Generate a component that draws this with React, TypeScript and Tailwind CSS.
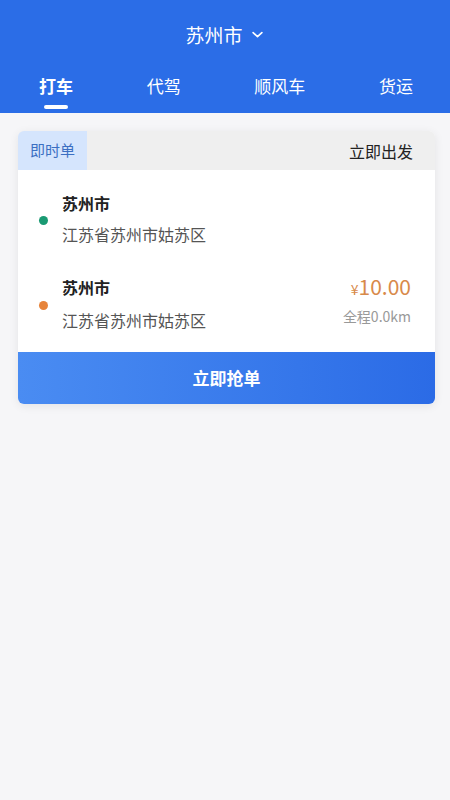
const tabs = ['打车', '代驾', '顺风车', '货运'];

const font = { fontFamily: '"Noto Sans CJK SC", "Noto Sans", sans-serif' };

const App = () => {
  return (
    <div className="min-h-[800px] w-full bg-[#f6f6f8]" style={font}>
      {/* 顶部蓝色区域 */}
      <div className="bg-[#2b6de7] h-[113px] flex flex-col">
        <div className="flex items-center justify-center gap-[7px] pt-[19px] h-[50px] text-white text-[19px]">
          <span className="leading-none">苏州市</span>
          <svg width="15" height="15" viewBox="0 0 24 24" fill="none" stroke="white" strokeWidth="2.6" strokeLinecap="round" strokeLinejoin="round">
            <path d="M5 9l7 6.5 7-6.5" />
          </svg>
        </div>
        <div className="flex justify-between pl-[39px] pr-[37px] mt-[27px]">
          {tabs.map((t, i) => (
            <div key={t} className="flex flex-col items-center">
              <span className={`text-[17px] leading-none text-white ${i === 0 ? 'font-bold' : ''}`}>{t}</span>
              <div className={`mt-[11px] h-[4px] w-[24px] rounded-full ${i === 0 ? 'bg-white' : 'bg-transparent'}`} />
            </div>
          ))}
        </div>
      </div>

      {/* 订单卡片 */}
      <div className="ml-[18px] mr-[15px] mt-[18px] rounded-[6px] bg-white shadow-[0_2px_10px_rgba(0,0,0,0.08)] overflow-hidden">
        <div className="flex items-center justify-between h-[39px] bg-[#efefef]">
          <div className="h-full px-[12px] flex items-center bg-[#d5e5fd] text-[#3b6fc2] text-[15px]">即时单</div>
          <span className="pr-[22px] text-[16px] text-[#222]">立即出发</span>
        </div>

        <div className="pl-[21px] pr-[24px] pt-[25px] pb-[24px]">
          <div className="flex items-center">
            <div className="w-[9px] h-[9px] rounded-full bg-[#1a9a73] mt-[4px]" />
            <div className="ml-[14px] flex flex-col">
              <span className="text-[16px] font-bold text-[#222] leading-none">苏州市</span>
              <span className="mt-[15px] text-[16px] text-[#555] leading-none">江苏省苏州市姑苏区</span>
            </div>
          </div>

          <div className="flex items-center mt-[37px]">
            <div className="w-[9px] h-[9px] rounded-full bg-[#e7843a] mt-[4px]" />
            <div className="ml-[14px] flex flex-col flex-1">
              <span className="text-[16px] font-bold text-[#222] leading-none">苏州市</span>
              <span className="mt-[17px] text-[16px] text-[#555] leading-none">江苏省苏州市姑苏区</span>
            </div>
            <div className="flex flex-col items-end -mt-[8px]">
              <span className="text-[#d88a4a] leading-none">
                <span className="text-[14px]">¥</span>
                <span className="text-[21px]">10.00</span>
              </span>
              <span className="mt-[12px] text-[14px] text-[#999] leading-none">全程0.0km</span>
            </div>
          </div>
        </div>

        <div className="h-[52px] flex items-center justify-center bg-gradient-to-r from-[#4a8cf2] to-[#2b6be6] text-white text-[17px] font-bold">
          立即抢单
        </div>
      </div>
    </div>
  );
};

export default App;
